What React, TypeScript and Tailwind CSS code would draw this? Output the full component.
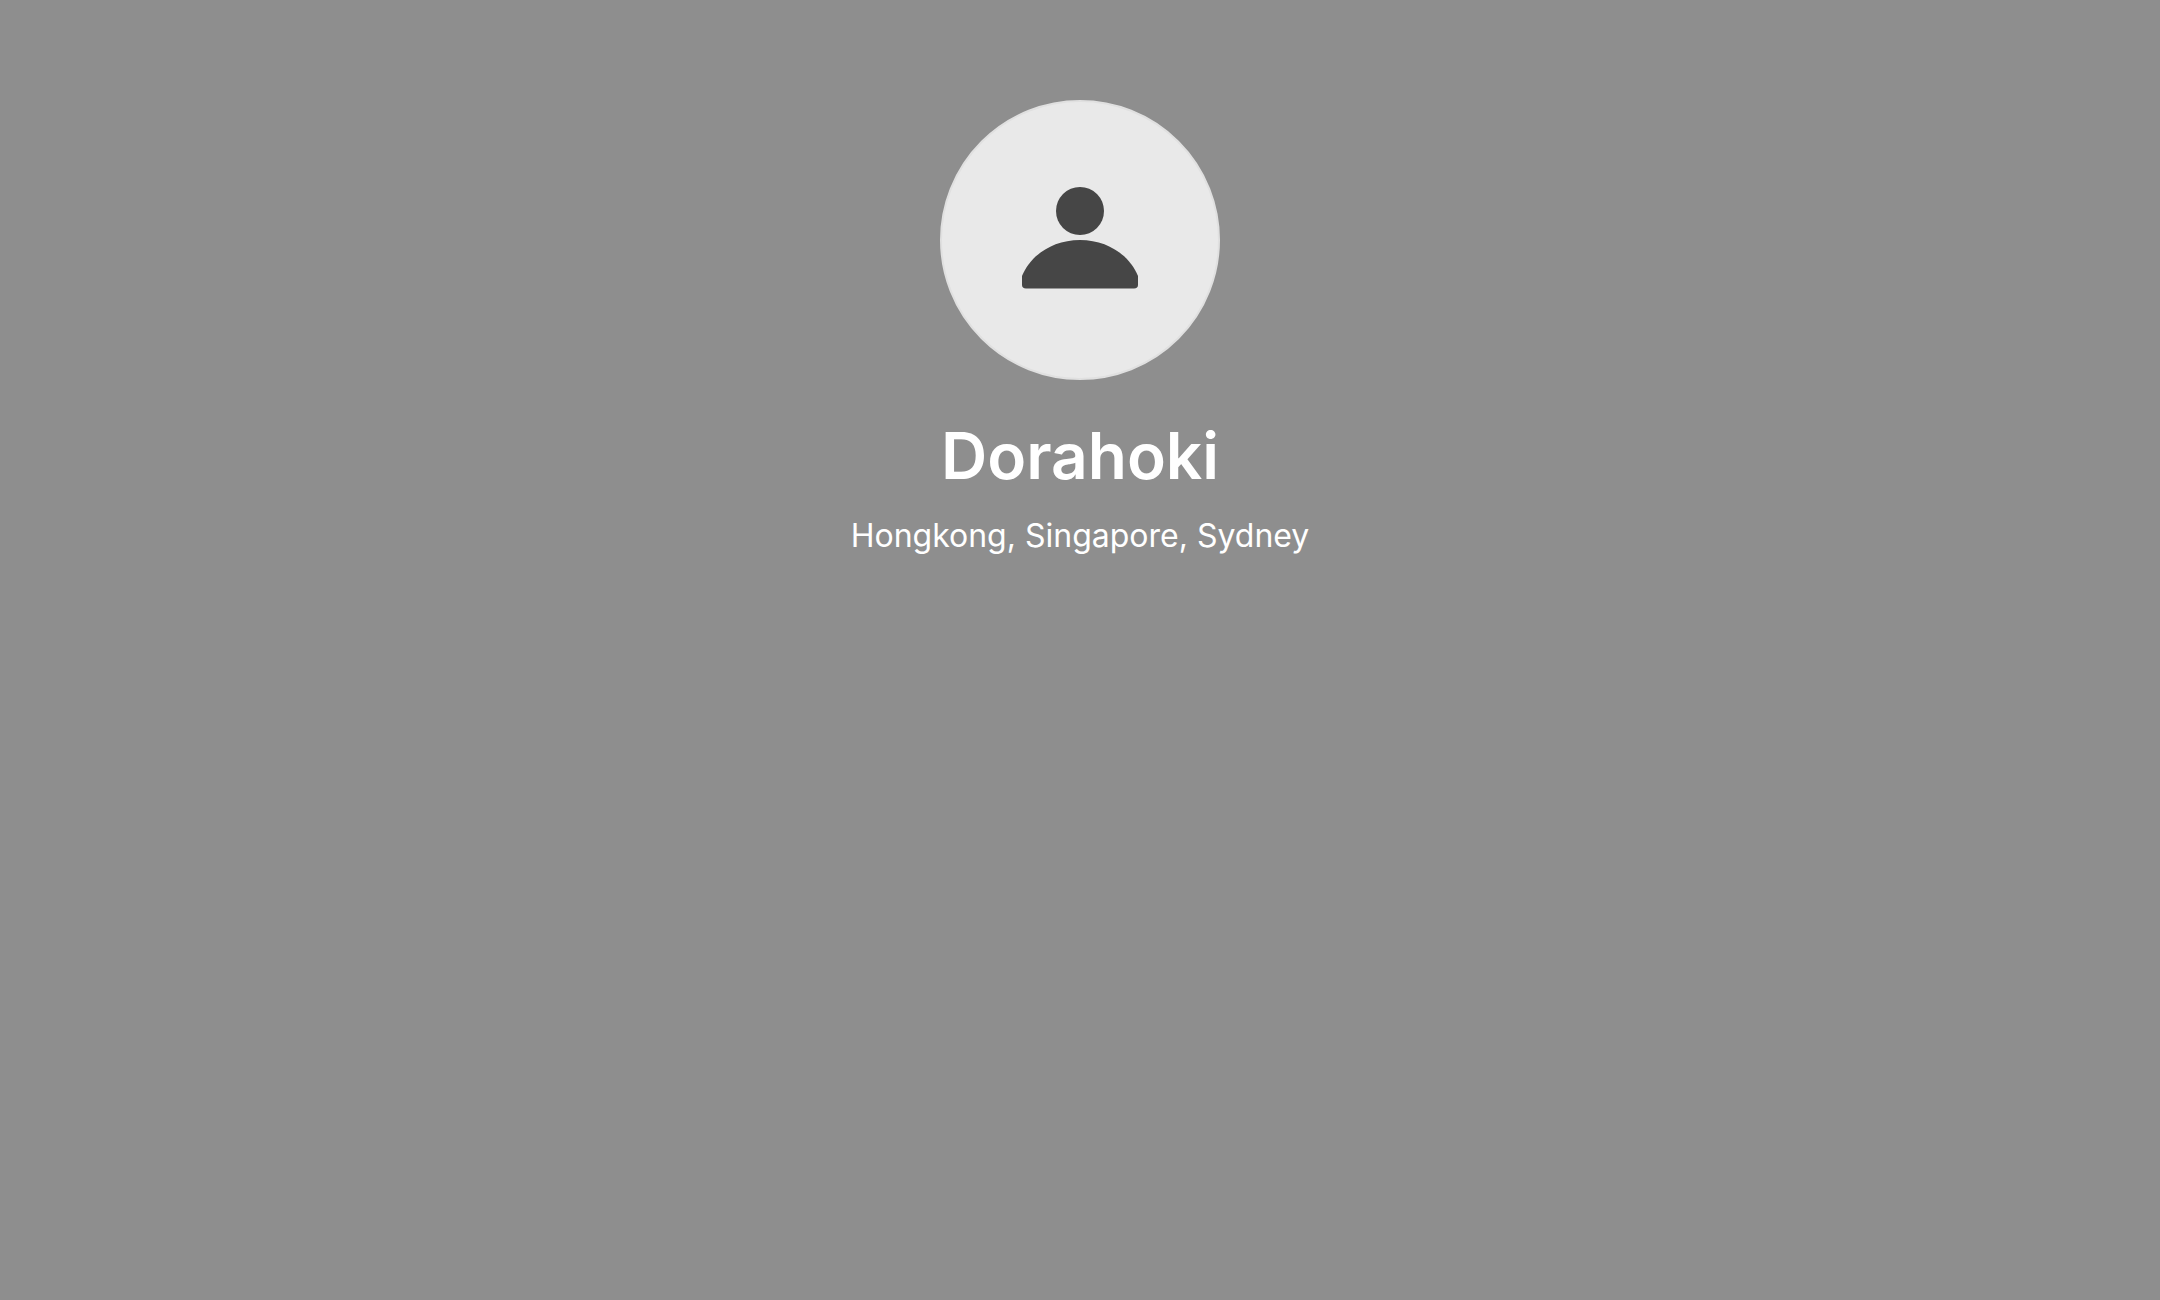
interface Props {
    name: string
    locations: string[]
}

function PersonIcon() {
    return (
        <svg viewBox="0 0 140 140" className="size-[140px] fill-[#464646]" aria-hidden="true">
            <circle cx="70" cy="41" r="24" />
            <path d="M12 106C20 86 42 70 70 70C98 70 120 86 128 106V115Q128 118.400 124 118.400H16Q12 118.400 12 115Z" />
        </svg>
    )
}

function ProfileHeader({ name, locations }: Props) {
    return (
        <header className="flex flex-col items-center px-6 pt-[100px] text-center text-white">
            {/* Avatar */}
            <div className="flex size-[280px] items-center justify-center rounded-full border-2 border-[#e0e0e0] bg-[#e9e9e9]">
                <PersonIcon />
            </div>

            <h1 className="mt-9 text-[64px] leading-[80px] font-semibold">{name}</h1>
            <p className="mt-4 text-[32px] leading-[48px]">{locations.join(', ')}</p>
        </header>
    )
}

export default function App() {
    return (
        <main className="min-h-screen bg-[#8e8e8e] font-['Inter',sans-serif]">
            <ProfileHeader name="Dorahoki" locations={['Hongkong', 'Singapore', 'Sydney']} />
        </main>
    )
}
